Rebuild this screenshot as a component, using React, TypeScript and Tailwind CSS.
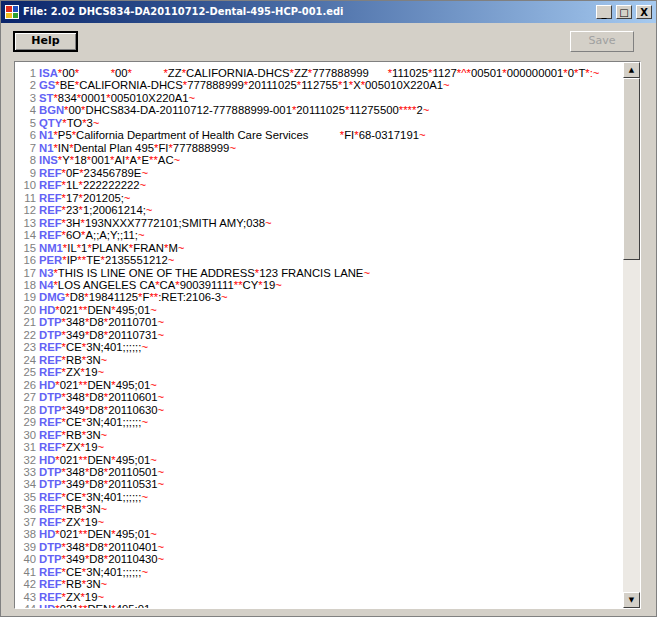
import React from "react";

const lines = [
  "ISA*00*          *00*          *ZZ*CALIFORNIA-DHCS*ZZ*777888999      *111025*1127*^*00501*000000001*0*T*:~",
  "GS*BE*CALIFORNIA-DHCS*777888999*20111025*112755*1*X*005010X220A1~",
  "ST*834*0001*005010X220A1~",
  "BGN*00*DHCS834-DA-20110712-777888999-001*20111025*11275500****2~",
  "QTY*TO*3~",
  "N1*P5*California Department of Health Care Services          *FI*68-0317191~",
  "N1*IN*Dental Plan 495*FI*777888999~",
  "INS*Y*18*001*AI*A*E**AC~",
  "REF*0F*23456789E~",
  "REF*1L*222222222~",
  "REF*17*201205;~",
  "REF*23*1;20061214;~",
  "REF*3H*193NXXX7772101;SMITH AMY;038~",
  "REF*6O*A;;A;Y;;11;~",
  "NM1*IL*1*PLANK*FRAN*M~",
  "PER*IP**TE*2135551212~",
  "N3*THIS IS LINE ONE OF THE ADDRESS*123 FRANCIS LANE~",
  "N4*LOS ANGELES CA*CA*900391111**CY*19~",
  "DMG*D8*19841125*F**:RET:2106-3~",
];
const block = (a: string, b: string) => [
  "HD*021**DEN*495;01~",
  `DTP*348*D8*${a}~`,
  `DTP*349*D8*${b}~`,
  "REF*CE*3N;401;;;;;;~",
  "REF*RB*3N~",
  "REF*ZX*19~",
];
lines.push(...block("20110701", "20110731"), ...block("20110601", "20110630"), ...block("20110501", "20110531"), ...block("20110401", "20110430"), "HD*021**DEN*495;01~");

function Line({ s }: { s: string }) {
  const i = s.indexOf("*");
  const tag = s.slice(0, i);
  const rest = s.slice(i);
  const parts = rest.split(/([*~^:])/);
  return (
    <>
      <span className="text-[#6262f5] font-semibold">{tag}</span>
      {parts.map((p, k) =>
        /^[*~^:]$/.test(p) && !(p === ":" && !s.startsWith("ISA")) ? (
          <span key={k} className="text-[#ff0000]">{p}</span>
        ) : (
          <span key={k}>{p}</span>
        )
      )}
    </>
  );
}

export default function App() {
  return (
    <div className="w-[657px] h-[617px] bg-[#d4d0c8] flex flex-col border border-[#808080] overflow-hidden" style={{ fontFamily: "Tahoma, 'DejaVu Sans', sans-serif" }}>
      <div className="h-[22px] flex items-center px-[4px] gap-[4px] bg-gradient-to-r from-[#0a246a] to-[#a6caf0] text-white text-[11px] font-bold">
        <div className="w-[14px] h-[14px] grid grid-cols-2 gap-[1px] p-[1px] bg-[#fff]">
          <div className="bg-[#e03020]" /><div className="bg-[#2050c0]" /><div className="bg-[#f0c020]" /><div className="bg-[#30a030]" />
        </div>
        <span className="flex-1" style={{ fontFamily: "'DejaVu Sans Condensed', 'DejaVu Sans', sans-serif" }}>File: 2.02 DHCS834-DA20110712-Dental-495-HCP-001.edi</span>
        {["_", "□", "X"].map((c) => (
          <div key={c} className="w-[16px] h-[14px] bg-[#d4d0c8] text-black text-[10px] font-bold flex items-center justify-center border border-t-white border-l-white border-r-[#404040] border-b-[#404040]">{c}</div>
        ))}
      </div>
      <div className="flex justify-between px-[12px] pt-[8px]">
        <button className="w-[65px] h-[21px] text-[11px] font-bold border-2 border-black bg-[#d4d0c8] shadow-[inset_1px_1px_0_#fff,inset_-1px_-1px_0_#808080]">Help</button>
        <button className="w-[64px] h-[21px] text-[11px] text-[#a0a0a0] border border-t-white border-l-white border-r-[#808080] border-b-[#808080] mr-[10px]">Save</button>
      </div>
      <div className="mt-[9px] ml-[13px] w-[627px] h-[548px] bg-white border border-t-[#808080] border-l-[#808080] border-r-white border-b-white flex">
        <div className="flex-1 overflow-hidden pt-[5px] text-[11.3px] leading-[12.48px] text-black whitespace-pre" style={{ fontFamily: "'Liberation Sans', Arial, sans-serif" }}>
          {lines.map((s, n) => (
            <div key={n} className="flex h-[12.48px]">
              <span className="w-[23px] shrink-0 text-right pr-[2px] text-[#808080]">{n + 1}</span>
              <span className="pl-[1px]"><Line s={s} /></span>
            </div>
          ))}
        </div>
        <div className="w-[17px] bg-[#ece9e4] flex flex-col">
          <div className="h-[16px] bg-[#d4d0c8] border border-t-white border-l-white border-r-[#404040] border-b-[#404040] text-[7px] flex items-center justify-center">▲</div>
          <div className="h-[182px] bg-[#d4d0c8] border border-t-white border-l-white border-r-[#404040] border-b-[#404040]" />
          <div className="flex-1" />
          <div className="h-[16px] bg-[#d4d0c8] border border-t-white border-l-white border-r-[#404040] border-b-[#404040] text-[7px] flex items-center justify-center">▼</div>
        </div>
      </div>
    </div>
  );
}
